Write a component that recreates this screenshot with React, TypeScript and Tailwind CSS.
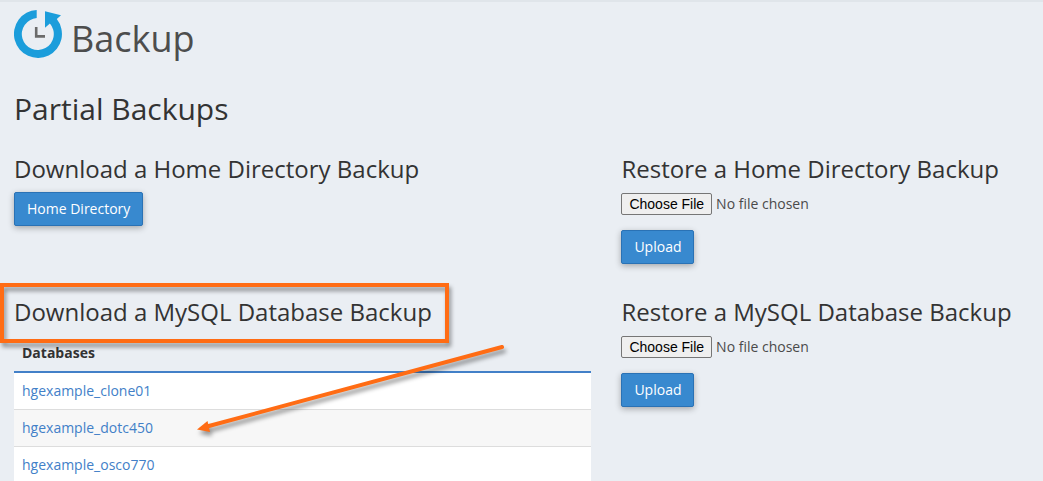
import React, { useState } from 'react';

interface RestoreFormProps {
  id: string;
  title: string;
}

const databases = ['hgexample_clone01', 'hgexample_dotc450', 'hgexample_osco770'];

const BackupIcon = () => (
  <svg className="h-12 w-12 shrink-0" viewBox="0 0 48 48" fill="none" aria-hidden="true">
    <path
      d="M22.7 0A24 24 0 1 0 42.8 9.1L47 5.3L31 1.2V17.8L35.9 13.6A16 16 0 1 1 22.7 8.1Z"
      fill="#1b9ddb"
    />
    <path d="M22.2 17V26.4H31" stroke="#6b6b6b" strokeWidth="2.6" />
  </svg>
);

const Arrow = () => (
  <svg
    className="pointer-events-none absolute top-10 left-[178px] h-[102px] w-[320px] drop-shadow-[2px_4px_2px_rgba(0,0,0,0.4)]"
    viewBox="0 0 320 102"
    aria-hidden="true"
  >
    <path d="M310 8L15 87.5" stroke="#ff6c14" strokeWidth="4" strokeLinecap="round" />
    <path d="M5 90.5L15.5 82L18 93Z" fill="#ff6c14" />
  </svg>
);

const buttonClass =
  'h-[34px] rounded-xs border border-[#2a72b5] bg-[#3889cf] px-3 leading-5 text-white shadow-[0_2px_6px_rgba(0,0,0,0.3)] hover:bg-[#2f7abb]';

const RestoreForm = ({ id, title }: RestoreFormProps) => (
  <form onSubmit={(e) => e.preventDefault()}>
    <h3 className="mb-[11px] text-2xl leading-[26px]">
      <label htmlFor={id}>{title}</label>
    </h3>
    <input
      id={id}
      type="file"
      className="mb-[13px] block h-6 w-full text-[#4a4a4a] file:mr-1 file:h-[22px] file:rounded-xs file:border file:border-solid file:border-[#767676] file:bg-[#efefef] file:px-[7px] file:font-['Liberation_Sans',sans-serif] file:text-sm file:leading-5 file:text-black"
    />
    <button type="submit" className={buttonClass}>
      Upload
    </button>
  </form>
);

const App = () => {
  const [selected, setSelected] = useState('hgexample_dotc450');

  return (
    <main className="min-h-screen border-t-2 border-[#e0e5ea] bg-[#eaeef3] px-3.5 pt-2 font-['Open_Sans',sans-serif] text-sm leading-5 text-[#333]">
      <header className="mb-[34px] flex items-end gap-[9px]">
        <BackupIcon />
        <h1 className="text-4xl leading-[38px] text-[#4d4d4d]">Backup</h1>
      </header>

      <h2 className="mb-[31px] text-3xl leading-[33px]">Partial Backups</h2>

      <div className="grid grid-cols-[17fr_12fr] gap-x-[30px] gap-y-[35px]">
        <section>
          <h3 className="mb-2.5 text-2xl leading-[26px]">Download a Home Directory Backup</h3>
          <button type="button" className={buttonClass}>
            Home Directory
          </button>
        </section>

        <RestoreForm id="restore-home" title="Restore a Home Directory Backup" />

        <section className="relative">
          <h3 className="relative mb-2.5 w-fit text-2xl leading-[26px]">
            Download a MySQL Database Backup
            <span className="pointer-events-none absolute -top-4 -right-[17px] -bottom-[18px] -left-3.5 border-4 border-[#ff6c14] drop-shadow-[2px_4px_2px_rgba(0,0,0,0.4)]" />
          </h3>
          <table className="w-full border-separate border-spacing-0">
            <thead>
              <tr>
                <th className="border-b-2 border-[#4280c8] p-2 text-left font-bold">Databases</th>
              </tr>
            </thead>
            <tbody>
              {databases.map((name) => (
                <tr key={name} className="group odd:bg-white even:bg-[#f7f7f7]">
                  <td className="border-t border-[#ddd] p-2 group-first:border-t-0">
                    <a
                      href={`#${name}`}
                      aria-current={selected === name}
                      onClick={() => setSelected(name)}
                      className="text-[#4280c8] hover:underline"
                    >
                      {name}
                    </a>
                  </td>
                </tr>
              ))}
            </tbody>
          </table>
          <Arrow />
        </section>

        <RestoreForm id="restore-mysql" title="Restore a MySQL Database Backup" />
      </div>
    </main>
  );
};

export default App;
